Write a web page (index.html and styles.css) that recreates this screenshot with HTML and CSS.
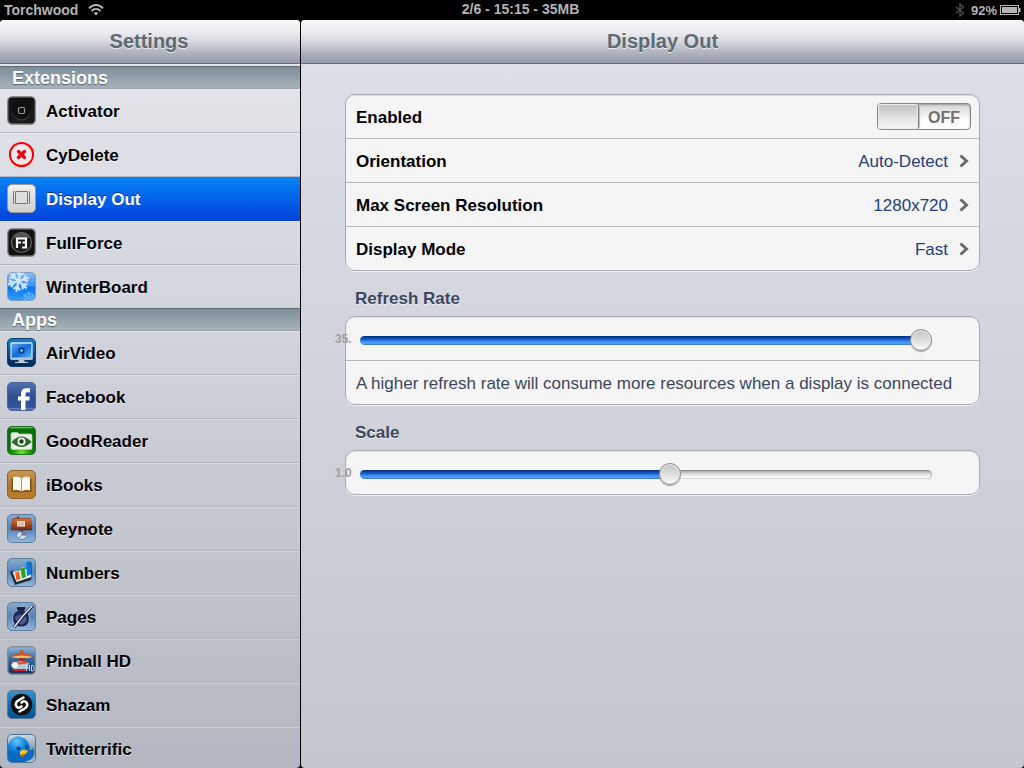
FILE: index.html
```html
<!DOCTYPE html>
<html lang="en">
<head>
<meta charset="utf-8">
<title>Settings</title>
<link rel="stylesheet" href="styles.css">
</head>
<body>
<div class="screen">
  <header class="status">
    <div class="status-left">
      <span>Torchwood</span>
      <svg class="wifi" width="16" height="12" viewBox="0 0 16 12" fill="none" stroke="#b4b4b4" stroke-width="1.9"><path d="M1 4.4C5-.1 11-.1 15 4.4M3.6 7c2.6-2.8 6.200-2.800 8.800 0"/><path d="M5.700 9.200c1.400-1.400 3.200-1.400 4.600 0L8 11.500z" fill="#b4b4b4" stroke="none"/></svg>
    </div>
    <div class="status-time">2/6 - 15:15 - 35MB</div>
    <div class="status-right">
      <svg width="10" height="14" viewBox="0 0 10 14" fill="none" stroke="#4a4a4a" stroke-width="1.4"><path d="M1 4l7.500 6L5 13V1l3.500 3L1 10"/></svg>
      <span class="percent">92%</span>
      <svg width="21" height="10" viewBox="0 0 21 10"><rect x=".5" y=".5" width="18" height="9" fill="none" stroke="#b4b4b4"/><path d="M2 2h15v6H2z" fill="#b4b4b4"/><path d="M19 3h1.500v4H19z" fill="#b4b4b4"/></svg>
    </div>
  </header>

  <div class="panes">
    <nav class="sidebar">
      <h1 class="bar">Settings</h1>
      <div class="list">
        <h2 class="section">Extensions</h2>
        <ul>
          <li><a href="#activator">
            <svg class="icon" viewBox="0 0 29 29"><defs><linearGradient id="dk" x2="0" y2="1"><stop stop-color="#111"/><stop offset="1" stop-color="#1c1c1c"/></linearGradient><linearGradient id="ring" x2="0" y2="1"><stop stop-color="#000"/><stop offset="1" stop-color="#444"/></linearGradient></defs><rect x=".7" y=".7" width="27.600" height="27.600" rx="4.500" fill="url(#dk)" stroke="#8b8b8b" stroke-width="1.400"/><circle cx="14.500" cy="14.500" r="10" fill="url(#ring)"/><circle cx="14.500" cy="13.700" r="9.500" fill="#101010"/><rect x="11.500" y="11.500" width="6" height="6" rx="1.500" fill="none" stroke="#999" stroke-width="1.200"/></svg>
            <span>Activator</span></a></li>
          <li><a href="#cydelete">
            <svg class="icon" viewBox="0 0 29 29"><circle cx="14.500" cy="14.500" r="11.600" fill="#f1e6ea" stroke="#f00" stroke-width="2"/><path d="M11.500 11.500l6 6m0-6l-6 6" stroke="#f00010" stroke-width="3.400" stroke-linecap="round"/></svg>
            <span>CyDelete</span></a></li>
          <li class="selected"><a href="#display" aria-current="page">
            <svg class="icon" viewBox="0 0 29 29"><defs><linearGradient id="lt" x2="0" y2="1"><stop stop-color="#f2f2f2"/><stop offset=".5" stop-color="#ddd"/><stop offset="1" stop-color="#d0d0d0"/></linearGradient></defs><rect x=".5" y=".5" width="28" height="28" rx="4.500" fill="url(#lt)" stroke="#999"/><path d="M8.500 7.500h12v12h-12zM6.500 7v13M22.500 7v13" fill="#ddd" stroke="#777"/></svg>
            <span>Display Out</span></a></li>
          <li><a href="#fullforce">
            <svg class="icon" viewBox="0 0 29 29"><rect x=".7" y=".7" width="27.600" height="27.600" rx="4.500" fill="#111" stroke="#8b8b8b" stroke-width="1.400"/><circle cx="14.500" cy="14.500" r="10" fill="#1b1b1b" stroke="#666" stroke-width="1.200"/><path d="M6.500 10a9 9 0 0116 0z" fill="#555"/><path d="M10 20v-9.500h5M10 14.500h4M15 10.500h4v9h-4M15.500 14.500h3" fill="none" stroke="#fff" stroke-width="2.200"/></svg>
            <span>FullForce</span></a></li>
          <li><a href="#winterboard">
            <svg class="icon" viewBox="0 0 29 29"><defs><linearGradient id="wb" x2="0" y2="1"><stop stop-color="#8abdf5"/><stop offset=".48" stop-color="#3b91f2"/><stop offset=".52" stop-color="#0f74f0"/><stop offset="1" stop-color="#2da0ff"/></linearGradient><clipPath id="tile"><rect x=".5" y=".5" width="28" height="28" rx="4.500"/></clipPath><g id="arm"><path d="M0 0V-10M0-5l-3.200-3M0-5l3.200-3"/></g></defs><rect x=".5" y=".5" width="28" height="28" rx="4.500" fill="url(#wb)" stroke="#7d9cc0"/><g clip-path="url(#tile)" stroke="#d2e7fb" stroke-width="2" fill="none"><g transform="translate(11.500 9) rotate(12) scale(1.100)"><use href="#arm"/><use href="#arm" transform="rotate(60)"/><use href="#arm" transform="rotate(120)"/><use href="#arm" transform="rotate(180)"/><use href="#arm" transform="rotate(240)"/><use href="#arm" transform="rotate(300)"/></g><g transform="translate(22 26) scale(.65)" opacity=".35"><use href="#arm"/><use href="#arm" transform="rotate(60)"/><use href="#arm" transform="rotate(120)"/><use href="#arm" transform="rotate(240)"/><use href="#arm" transform="rotate(300)"/></g></g></svg>
            <span>WinterBoard</span></a></li>
        </ul>
        <h2 class="section">Apps</h2>
        <ul>
          <li><a href="#airvideo">
            <svg class="icon" viewBox="0 0 29 29"><defs><linearGradient id="av" x2="0" y2="1"><stop stop-color="#1684c8"/><stop offset=".5" stop-color="#075296"/><stop offset="1" stop-color="#03264f"/></linearGradient><linearGradient id="avs" x2="1" y2="1"><stop stop-color="#65aaf4"/><stop offset=".5" stop-color="#126bda"/><stop offset="1" stop-color="#5bbcf5"/></linearGradient></defs><rect x=".5" y=".5" width="28" height="28" rx="4.500" fill="url(#av)" stroke="#12406e"/><rect x="4" y="5" width="21" height="16" rx="1" fill="url(#avs)" stroke="#d4e2ec" stroke-width="1.300"/><path d="M3.500 19.500h22v2h-22zM12 22h5l1 2H11z" fill="#b8c8d6"/><path d="M8 24.500h13" stroke="#c5d3df"/><circle cx="14.500" cy="12.500" r="3.200" fill="#0b296f" stroke="#1566cc"/><path d="M13.500 10.500l3 2-3 2z" fill="#75e1ff"/></svg>
            <span>AirVideo</span></a></li>
          <li><a href="#facebook">
            <svg class="icon" viewBox="0 0 29 29"><defs><linearGradient id="fb" x2="0" y2="1"><stop stop-color="#5471ad"/><stop offset=".5" stop-color="#2f4f92"/><stop offset="1" stop-color="#35569b"/></linearGradient></defs><rect x=".5" y=".5" width="28" height="28" rx="4.500" fill="url(#fb)" stroke="#4d6596"/><path d="M2 26h25v1.500H2z" fill="#5d7eb8"/><path d="M14 28v-9.500h-3V14.500h3v-2.300c0-4 2-6 5.500-6H23v4h-2.200c-1.700 0-2.300.6-2.300 2v2.300h4.300l-.5 4h-3.800V28z" fill="#fff"/></svg>
            <span>Facebook</span></a></li>
          <li><a href="#goodreader">
            <svg class="icon" viewBox="0 0 29 29"><defs><radialGradient id="gr" cy=".95"><stop stop-color="#7cea22"/><stop offset=".5" stop-color="#22a410"/><stop offset="1" stop-color="#087009"/></radialGradient></defs><rect x=".5" y=".5" width="28" height="28" rx="4.500" fill="url(#gr)" stroke="#276f22"/><path d="M3.500 1.800h22" stroke="#8bdb72"/><path d="M4 8q0-1.500 1.500-1.500h5L12 8h11.500Q25 8 25 9.500V22q0 1.500-1.500 1.500h-18Q4 23.500 4 22z" fill="#e7f0e4" stroke="#b8c8b4" stroke-width=".7"/><path d="M4.500 16q10-11 20 0-10 10-20 0z" fill="#2e652b"/><circle cx="14.500" cy="15.500" r="4" fill="#f3f6f2"/><circle cx="14.500" cy="15.500" r="2.200" fill="#15481a"/></svg>
            <span>GoodReader</span></a></li>
          <li><a href="#ibooks">
            <svg class="icon" viewBox="0 0 29 29"><defs><linearGradient id="ib" x2="0" y2="1"><stop stop-color="#c59a55"/><stop offset=".5" stop-color="#b57a2b"/><stop offset="1" stop-color="#b87c2c"/></linearGradient></defs><rect x=".5" y=".5" width="28" height="28" rx="4.500" fill="url(#ib)" stroke="#8e6329"/><path d="M4.500 9l2-1.500v13h16v-13l2 1.500v13h-8.500l-1.500 1-1.500-1H4.500z" fill="#78501d"/><path d="M14.500 8.500Q10.500 5 6 7.500V20.500q4.500-2 8.500 1 4-3 8.500-1V7.500q-4.500-2.500-8.500 1z" fill="#fbf8ed"/><path d="M14.500 8.500v13" stroke="#a89d84"/></svg>
            <span>iBooks</span></a></li>
          <li><a href="#keynote">
            <svg class="icon" viewBox="0 0 29 29"><defs><linearGradient id="bl" x2="0" y2="1"><stop stop-color="#8aabcf"/><stop offset=".5" stop-color="#5484b9"/><stop offset="1" stop-color="#93b8df"/></linearGradient><linearGradient id="wood" x2="0" y2="1"><stop stop-color="#e06c2a"/><stop offset="1" stop-color="#8d3011"/></linearGradient></defs><rect x=".5" y=".5" width="28" height="28" rx="4.500" fill="url(#bl)" stroke="#5d7d9f"/><path d="M10 4.500l2-2M14 15v6" stroke="#333" stroke-width="1.500"/><path d="M6 4.500h17.500l1.500 10H4z" fill="url(#wood)" stroke="#8f3918" stroke-width=".7"/><path d="M4 14.500h21v1.800H4z" fill="#6e260e"/><rect x="10.500" y="7.500" width="7" height="4.500" fill="#d4bfb1" stroke="#f8e9df"/><path d="M13 16h3v3h-3z" fill="#39485c"/><ellipse cx="14.500" cy="21.500" rx="5" ry="3.800" fill="#d8e2ef" stroke="#576b8a" stroke-width=".7"/><path d="M14.500 21.500V18q4 0 5 3.500z" fill="#6074a1"/><path d="M14.500 21.500l-3.500 2.800" stroke="#6074a1"/></svg>
            <span>Keynote</span></a></li>
          <li><a href="#numbers">
            <svg class="icon" viewBox="0 0 29 29"><rect x=".5" y=".5" width="28" height="28" rx="4.500" fill="url(#bl)" stroke="#5d7d9f"/><path d="M3 13.500l3-1 3 10 16-5-1 4.500L8 27z" fill="#222b34"/><path d="M5.500 14l4 10 15-5-3-8z" fill="#e8edf3"/><path d="M8 14.500l4-1 1.500 7.500-4 1.500z" fill="#ee6116"/><path d="M13.500 10.500l4-1 1.500 9.500-4 1.500z" fill="#28a51e"/><path d="M19 4.500l4-1.500 1 13.500-4 1.500z" fill="#087bea"/><path d="M8 14.500l2-1.500 3 .5zM13.500 10.500L15.500 9l2.500.5z" fill="#b3e38d"/><path d="M23 3.500l1.500 1 .5 11-1 1z" fill="#0553b2"/></svg>
            <span>Numbers</span></a></li>
          <li><a href="#pages">
            <svg class="icon" viewBox="0 0 29 29"><rect x=".5" y=".5" width="28" height="28" rx="4.500" fill="url(#bl)" stroke="#5d7d9f"/><path d="M10.500 4.500h7v4q5 2 5 8 0 7-6 8.500h-5q-6-2-6-8.500 0-6 5-8z" fill="#1d2b58" stroke="#a1b8d4"/><path d="M8 15q6-5 12 1-1 6-6 6.500-5-1-6-7.500z" fill="#4b5695"/><path d="M10 5h8v3h-8z" fill="#161e3e"/><path d="M26 3.500L13.500 17 7 25.500" fill="none" stroke="#1a1f2c" stroke-width="3"/><path d="M25.500 3.500L14.500 15.500 7 25.500" fill="none" stroke="#dce4ed" stroke-width="1.600"/></svg>
            <span>Pages</span></a></li>
          <li><a href="#pinball">
            <svg class="icon" viewBox="0 0 29 29"><defs><linearGradient id="pb" x2="0" y2="1"><stop stop-color="#97b9dd"/><stop offset=".4" stop-color="#3470b0"/><stop offset="1" stop-color="#102e60"/></linearGradient></defs><rect x=".7" y=".7" width="27.600" height="27.600" rx="4.500" fill="url(#pb)" stroke="#8b8d91" stroke-width="1.400"/><path d="M4 11q4-4 8-4l1.500-3h2L17 7q6 0 9 4l-11 2z" fill="#cf5427"/><path d="M4 11q10-3 22 0l-11 2z" fill="#f0bd79"/><path d="M11 12h8l-1 4h-6z" fill="#98382b"/><path d="M4 18q7-5 18-1l-2 7H9q-5-2-5-6z" fill="#b4c9da"/><path d="M5 16.500l7 1 8-1" fill="none" stroke="#e34825" stroke-width="2"/><circle cx="8" cy="19" r="3" fill="#f4f8fa"/><path d="M6 23h13v2H6z" fill="#d02424"/><path d="M19.500 19v6m0-3h3m0-3v6M24.500 19.500h1.500l1 2v2l-1 1.500h-1.500z" fill="none" stroke="#c8d6e8" stroke-width="1"/></svg>
            <span>Pinball HD</span></a></li>
          <li><a href="#shazam">
            <svg class="icon" viewBox="0 0 29 29"><defs><linearGradient id="sz" x2="0" y2="1"><stop stop-color="#3d93cb"/><stop offset=".5" stop-color="#116db3"/><stop offset="1" stop-color="#075393"/></linearGradient></defs><rect x=".5" y=".5" width="28" height="28" rx="4.500" fill="url(#sz)" stroke="#5b7893"/><circle cx="14.500" cy="14.500" r="10.800" fill="#111"/><g fill="none" stroke="#fff" stroke-width="2.500" stroke-linecap="round"><path d="M16.500 7.500l-4.500 2.500q-5 3-2.500 6.500 2.500 2.500 5-.2"/><path d="M12.500 21.500l4.500-2.500q5-3 2.500-6.500-2.500-2.500-5 .2"/></g></svg>
            <span>Shazam</span></a></li>
          <li><a href="#twitterrific">
            <svg class="icon" viewBox="0 0 29 29"><defs><linearGradient id="tw" x2="0" y2="1"><stop stop-color="#d1dce5"/><stop offset=".6" stop-color="#738ea6"/><stop offset="1" stop-color="#bac8d2"/></linearGradient><radialGradient id="bird" cx=".35" cy=".2"><stop stop-color="#65c6ff"/><stop offset=".6" stop-color="#168be5"/><stop offset="1" stop-color="#0669c3"/></radialGradient></defs><rect x=".5" y=".5" width="28" height="28" rx="4.500" fill="url(#tw)" stroke="#52738f"/><path d="M1 21Q-1 10 5 5 9 1 14 3q7 2 8.500 9.500L23 17l3-3q3 8-3 12l-5 2H5Q1 28 1 25z" fill="url(#bird)"/><circle cx="11.500" cy="14.500" r="2" fill="#073c81"/><circle cx="19.500" cy="13" r="1.300" fill="#073c81"/><path d="M13 17.500q4-4 8 0l-3 3-5 .5z" fill="#ffc034"/><path d="M13 21l5-1-2 4z" fill="#c86012"/></svg>
            <span>Twitterrific</span></a></li>
        </ul>
      </div>
    </nav>

    <main class="detail">
      <h1 class="bar">Display Out</h1>
      <div class="content">
        <div class="group">
          <div class="row">
            <label class="text" for="enabled">Enabled</label>
            <span class="switch"><input type="checkbox" id="enabled"><span class="switch-text" aria-hidden="true">OFF</span></span>
          </div>
          <a class="row" href="#orientation"><span class="text">Orientation</span><span class="text value">Auto-Detect</span><svg class="chevron" viewBox="0 0 10 14"><path d="M1.500 1.500L7.500 7l-6 5.500"/></svg></a>
          <a class="row" href="#resolution"><span class="text">Max Screen Resolution</span><span class="text value">1280x720</span><svg class="chevron" viewBox="0 0 10 14"><path d="M1.500 1.500L7.500 7l-6 5.500"/></svg></a>
          <a class="row" href="#mode"><span class="text">Display Mode</span><span class="text value">Fast</span><svg class="chevron" viewBox="0 0 10 14"><path d="M1.500 1.500L7.500 7l-6 5.500"/></svg></a>
        </div>

        <h2 class="caption"><label for="refresh">Refresh Rate</label></h2>
        <div class="group">
          <div class="row slider">
            <output class="reading" for="refresh">35.</output>
            <input type="range" id="refresh" min="0" max="35" value="35" style="--fill:98%">
          </div>
          <p class="row note"><span class="text">A higher refresh rate will consume more resources when a display is connected</span></p>
        </div>

        <h2 class="caption"><label for="scale">Scale</label></h2>
        <div class="group">
          <div class="row slider">
            <output class="reading" for="scale">1.0</output>
            <input type="range" id="scale" min="0" max="1.84" step="0.01" value="1" style="--fill:54%">
          </div>
        </div>
      </div>
    </main>
  </div>
</div>
</body>
</html>
```

FILE: styles.css
```css
* { box-sizing: border-box; }

body {
  margin: 0;
  background: #000;
  color: #000;
  font-family: "Liberation Sans", Arial, Helvetica, sans-serif;
  font-size: 17px;
}

h1, h2, p, ul { margin: 0; padding: 0; }
ul { list-style: none; }
a { color: inherit; text-decoration: none; }

.screen {
  display: flex;
  flex-direction: column;
  height: 100vh;
  overflow: hidden;
}

/* Status bar */
.status {
  display: grid;
  grid-template-columns: 1fr auto 1fr;
  flex: none;
  height: 20px;
  padding: 0 3px 0 4px;
  color: #b4b4b4;
  font-size: 14px;
  font-weight: bold;
  line-height: 19px;
}
.status-left, .status-right { display: flex; align-items: center; }
.status-left { gap: 10px; }
.status-time { padding-left: 16px; }
.status-right { justify-content: flex-end; gap: 3px; }
.percent { padding-left: 3px; font-size: 13px; }

/* Panes */
.panes {
  display: grid;
  grid-template-columns: 300px 1fr;
  gap: 1px;
  flex: 1;
  min-height: 0;
}
.sidebar, .detail {
  display: flex;
  flex-direction: column;
  min-width: 0;
  min-height: 0;
  overflow: hidden;
  border-radius: 4px;
}
.sidebar { background: linear-gradient(#e6e8ed, #b3b7c1); }
.detail { background: linear-gradient(#dce0e8, #c4c6ce); }

.bar {
  flex: none;
  height: 44px;
  border-bottom: 1px solid #646d7e;
  background: linear-gradient(#f8f8fb, #eeeef2 25%, #d7d8df 50%, #b0b4c0 75%, #949aaa);
  color: #5d6a72;
  font-size: 20px;
  line-height: 43px;
  text-align: center;
  text-shadow: 0 1px 0 #e8eaef;
}
.sidebar .bar { padding-right: 2px; }

/* Sidebar list */
.list { padding-top: 2px; }
.section {
  height: 23px;
  padding-left: 12px;
  border-top: 1px solid #5d6c77;
  border-bottom: 1px solid #98a3ac;
  background: linear-gradient(#7d8f9b, #a6b2ba);
  color: #fff;
  font-size: 18px;
  line-height: 22px;
  text-shadow: 0 1px 1px #56636c;
}
.list li {
  border-bottom: 1px solid #b3b7bf;
  box-shadow: inset 0 1px 0 rgba(255, 255, 255, .3);
}
.list li:last-child { border-bottom: 0; }
.list a {
  display: flex;
  align-items: center;
  gap: 10px;
  height: 43px;
  padding-left: 7px;
  font-weight: bold;
  text-shadow: 0 1px 0 rgba(255, 255, 255, .6);
}
.list a span { padding-top: 3px; }
.list .selected {
  background: linear-gradient(#0583f4, #0143de);
  border-bottom-color: #0143de;
  box-shadow: none;
}
.selected a { color: #fff; text-shadow: 0 -1px 0 rgba(0, 0, 60, .6); }
.icon { flex: none; width: 29px; height: 29px; }

/* Settings groups */
.content { padding: 30px 44px 0; }
.group {
  border: 1px solid #a7abb1;
  border-radius: 10px;
  background: #f5f5f5;
  box-shadow: 0 1px 0 #f1f2f5, inset 0 1px 0 #e0e1e3;
}
.row {
  display: flex;
  align-items: center;
  min-height: 43px;
  padding: 0 10px;
  font-weight: bold;
}
.row + .row { min-height: 44px; border-top: 1px solid #b7babd; }
.text { padding-top: 3px; }
.value { margin-left: auto; color: #24407a; font-weight: normal; }
.chevron { width: 10px; height: 14px; margin-left: 11px; fill: none; stroke: #696969; stroke-width: 3; }
.row.note { color: #3c475d; font-weight: normal; }
.caption {
  height: 45px;
  padding: 8px 10px 0;
  color: #3c475d;
  font-size: 17px;
  line-height: 40px;
  text-shadow: 0 1px 0 #eef0f4;
}

/* Switch */
.switch { position: relative; margin-left: auto; margin-right: -2px; height: 27px; }
.switch input {
  display: block;
  appearance: none;
  width: 94px;
  height: 27px;
  margin: 0;
  border: 1px solid #858585;
  border-radius: 4px;
  background: linear-gradient(#d5d5d5, #eee 40%, #fcfcfc 60%, #fff);
  box-shadow: inset 0 1px 2px #999;
}
.switch input::before {
  content: "";
  display: block;
  width: 40px;
  height: 25px;
  border-right: 1px solid #7f7f7f;
  border-radius: 3px;
  background: linear-gradient(#bfbfbf, #e5e5e5 60%, #f7f7f7);
  box-shadow: inset 0 0 0 1px #eee, 1px 0 1px #bbb;
}
.switch-text {
  position: absolute;
  inset: 0 0 0 40px;
  color: #707070;
  font-size: 16px;
  line-height: 29px;
  text-align: center;
  pointer-events: none;
}

/* Sliders */
.slider { position: relative; padding: 0 47px 0 14px; }
.reading {
  position: absolute;
  left: -11px;
  color: #a0a0a0;
  font-size: 12px;
  line-height: 48px;
}
.slider input {
  appearance: none;
  flex: 1;
  min-width: 0;
  height: 23px;
  margin: 3px 0 0;
  background: none;
}
.slider input::-webkit-slider-runnable-track {
  height: 9px;
  border-radius: 5px;
  background:
    linear-gradient(#032a74, #0d49a8 20%, #1f66d3 45%, #4290f5 60%, #4e9bfb 88%, #2b6cc6) 0 0 / var(--fill) 100% no-repeat,
    linear-gradient(#7d7d7d, #bbb 20%, #e4e4e4 50%, #fbfbfb 85%, #c2c2c2);
  box-shadow: inset -1px 0 0 #aaa;
}
.slider input::-webkit-slider-thumb {
  appearance: none;
  width: 22px;
  height: 22px;
  margin-top: -7px;
  border: 1px solid #8d8d8d;
  border-radius: 50%;
  background: linear-gradient(#c4c4c4, #dedede 50%, #fafafa);
  box-shadow: inset 0 0 0 1px #eee, 0 1px 1px #aaa;
}
```
